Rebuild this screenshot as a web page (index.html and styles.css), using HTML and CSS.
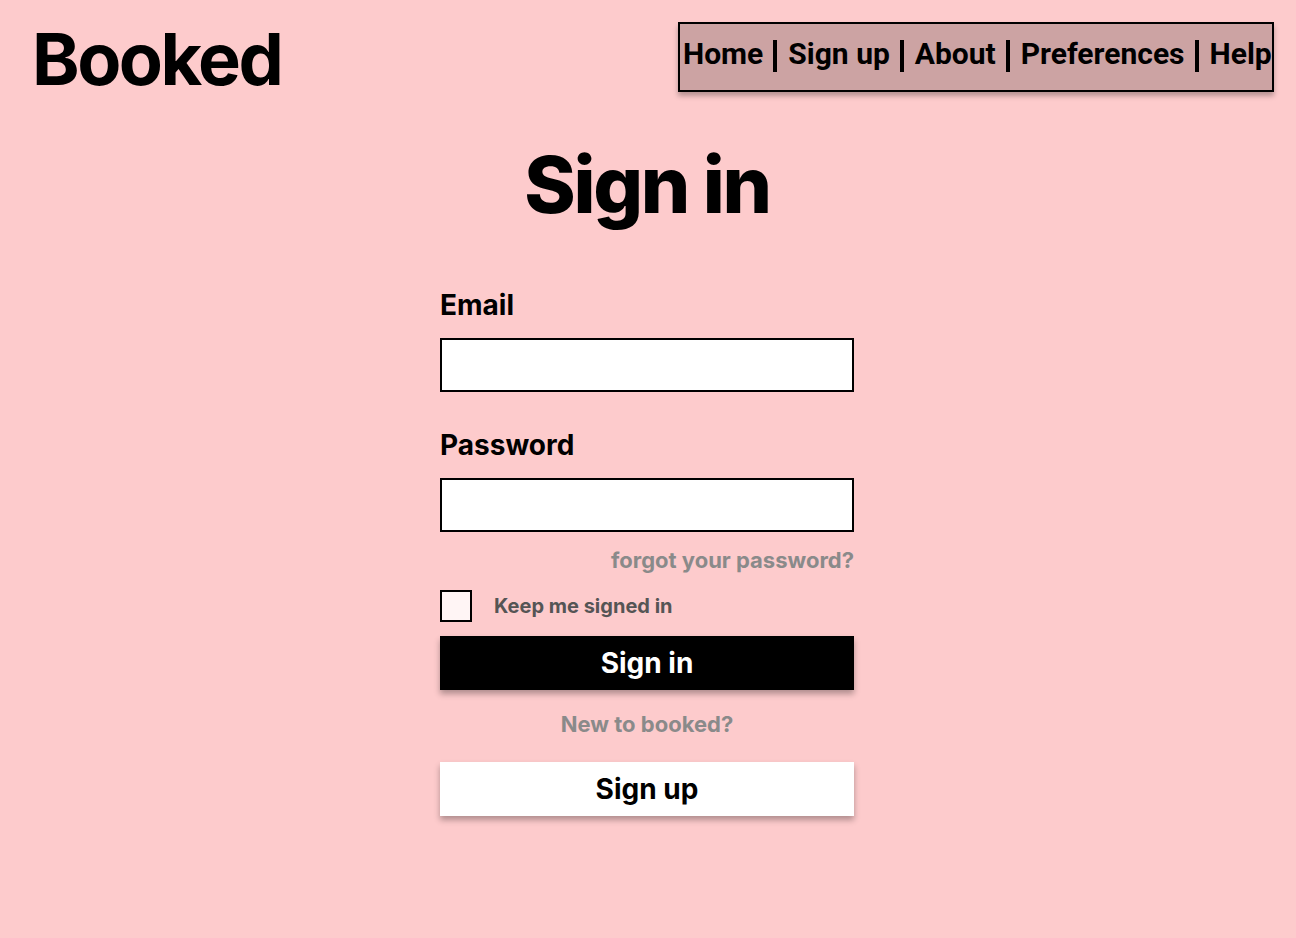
FILE: index.html
```html
<!DOCTYPE html>
<html>
<head>
<meta charset="utf-8">
<title>Booked - Sign in</title>
<link rel="stylesheet" href="styles.css">
</head>
<body>
<header class="top">
  <div class="logo">Booked</div>
  <nav class="nav">
    <a href="#">Home</a><span class="sep"></span><a href="#">Sign up</a><span class="sep"></span><a href="#">About</a><span class="sep"></span><a href="#">Preferences</a><span class="sep"></span><a href="#">Help</a>
  </nav>
</header>
<main class="main">
  <h1 class="title">Sign in</h1>
  <form class="form">
    <label class="label" for="email">Email</label>
    <input class="input" id="email" type="text">
    <label class="label label-pw" for="pw">Password</label>
    <input class="input" id="pw" type="password">
    <a class="forgot" href="#">forgot your password?</a>
    <div class="keep">
      <span class="check"></span>
      <span class="keep-text">Keep me signed in</span>
    </div>
    <button type="button" class="btn btn-dark">Sign in</button>
    <div class="new">New to booked?</div>
    <button type="button" class="btn btn-light">Sign up</button>
  </form>
</main>
</body>
</html>
```

FILE: styles.css
```css
* { box-sizing: border-box; }
html, body { margin: 0; padding: 0; }
body {
  background: #fdcbcc;
  font-family: Inter, "Noto Sans", sans-serif;
  color: #000;
  width: 1296px;
  height: 938px;
  overflow: hidden;
}
.top {
  display: flex;
  justify-content: space-between;
  align-items: flex-start;
  padding: 22px 22px 0 32px;
}
.logo {
  font-size: 72px;
  font-weight: 700;
  line-height: 1;
  letter-spacing: -2.5px;
  padding-top: 1px;
}
.nav {
  display: flex;
  align-items: center;
  background: #cca3a3;
  border: 2px solid #000;
  height: 70px;
  width: 596px;
  padding: 0 0 8px 3px;
  box-shadow: 0 4px 5px rgba(0,0,0,0.28);
  font-family: Roboto, "Liberation Sans", sans-serif;
  font-weight: 700;
  font-size: 30px;
  white-space: nowrap;
}
.nav a { color: #000; text-decoration: none; flex-shrink: 0; }
.sep {
  flex-shrink: 0;
  display: inline-block;
  width: 4px;
  height: 32px;
  background: #000;
  margin: 6px 11px 0 10px;
}
.main {
  display: flex;
  flex-direction: column;
  align-items: center;
  padding-right: 2px;
}
.title {
  margin: 43px 0 0 0;
  font-size: 78px;
  font-weight: 800;
  line-height: 1.2;
  letter-spacing: -2.3px;
}
.form {
  width: 414px;
  display: flex;
  flex-direction: column;
  margin-top: 56px;
}
.label {
  font-size: 28px;
  font-weight: 700;
  line-height: 34px;
  margin-bottom: 16px;
}
.label-pw { margin-top: 36px; }
.input {
  height: 54px;
  border: 2px solid #000;
  background: #fff;
  width: 100%;
  margin: 0;
}
.forgot {
  align-self: flex-end;
  color: #8a8a8a;
  font-size: 22px;
  font-weight: 700;
  text-decoration: none;
  margin-top: 15px;
  line-height: 26px;
}
.keep {
  display: flex;
  align-items: center;
  margin-top: 17px;
}
.check {
  width: 32px;
  height: 32px;
  border: 2px solid #000;
  background: #fff5f5;
}
.keep-text {
  margin-left: 22px;
  font-size: 20px;
  font-weight: 700;
  color: #555;
}
.btn {
  height: 54px;
  width: 100%;
  border: none;
  font-family: Inter, "Noto Sans", sans-serif;
  font-size: 28px;
  font-weight: 700;
  box-shadow: 0 4px 6px rgba(0,0,0,0.3);
  cursor: pointer;
}
.btn-dark { background: #000; color: #fff; margin-top: 14px; }
.btn-light { background: #fff; color: #000; }
.new {
  text-align: center;
  color: #8a8a8a;
  font-size: 22px;
  font-weight: 700;
  line-height: 26px;
  margin: 21px 0 25px 0;
}
```
